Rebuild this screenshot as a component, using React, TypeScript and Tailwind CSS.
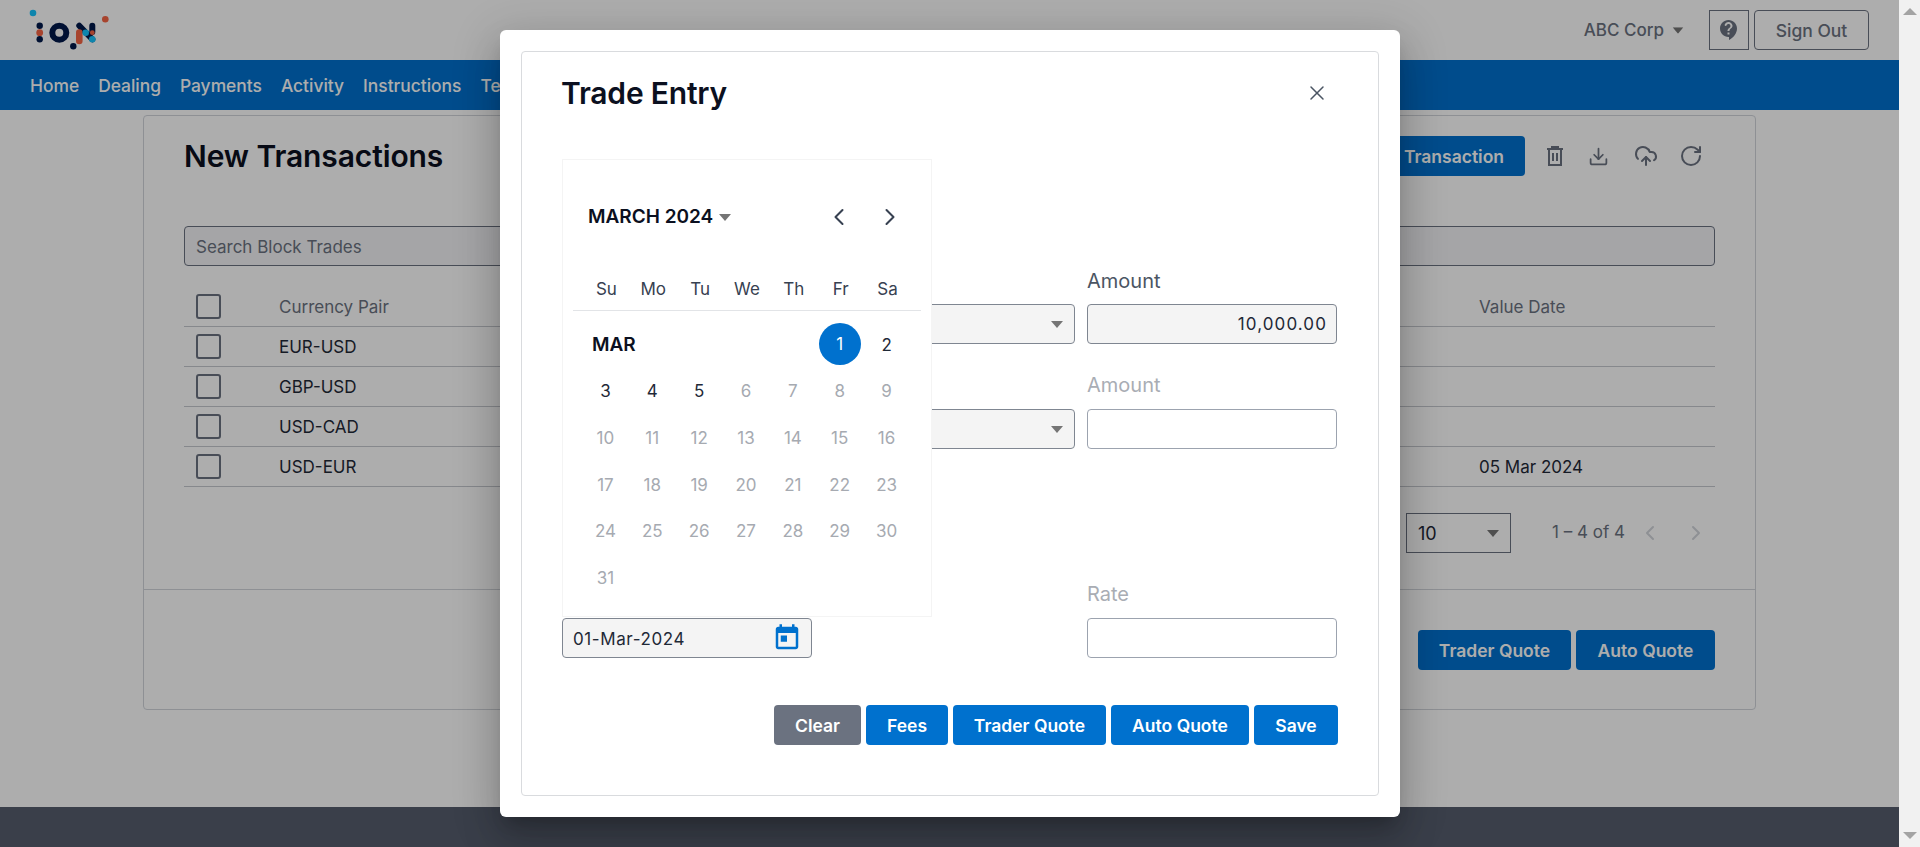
import { ChevronLeft, ChevronRight, CloudUpload, Download, RotateCw, X } from "lucide-react";

const navItems = ["Home", "Dealing", "Payments", "Activity", "Instructions", "Templates"];
const rows = [
    { pair: "EUR-USD", date: "" },
    { pair: "GBP-USD", date: "" },
    { pair: "USD-CAD", date: "" },
    { pair: "USD-EUR", date: "05 Mar 2024" },
];
const weekDays = ["Su", "Mo", "Tu", "We", "Th", "Fr", "Sa"];
const days = Array.from({ length: 29 }, (_, i) => i + 3);

function Caret({ className = "" }: { className?: string }) {
    return (
        <svg width="12" height="7" viewBox="0 0 12 7" className={className}>
            <polygon points="0,0 12,0 6,7" fill="#757575" />
        </svg>
    );
}

function Logo() {
    return (
        <svg width="90" height="50" viewBox="25 5 90 50">
            <circle cx="33" cy="13" r="3.3" fill="#15c4ff" />
            <circle cx="105.3" cy="19.3" r="3.3" fill="#f76545" />
            <circle cx="39.7" cy="25.7" r="3.2" fill="#00184a" />
            <circle cx="39.7" cy="39.3" r="3.2" fill="#00184a" />
            <circle cx="39.7" cy="32.7" r="3.4" fill="#f76545" />
            <circle cx="59.3" cy="32.7" r="7" fill="none" stroke="#00184a" strokeWidth="6" />
            <circle cx="73.3" cy="46.3" r="3.2" fill="#00184a" />
            <path d="M79.3 25.7 92.3 39.3" stroke="#00184a" strokeWidth="6" strokeLinecap="round" />
            <path d="M79.3 32.5V41" stroke="#f76545" strokeWidth="6.6" strokeLinecap="round" />
            <path d="M92.3 25.7V32" stroke="#00184a" strokeWidth="6" strokeLinecap="round" />
            <circle cx="92.3" cy="32.7" r="2.4" fill="#f76545" />
            <circle cx="85.7" cy="32.7" r="3.3" fill="#15c4ff" />
            <circle cx="92.3" cy="39.3" r="3.3" fill="#15c4ff" />
        </svg>
    );
}

function HelpIcon() {
    return (
        <svg width="24" height="24" viewBox="0 0 24 24" fill="#6b7280">
            <path d="M11.5 2C6.81 2 3 5.81 3 10.5S6.81 19 11.5 19h.5v3c4.86-2.34 8-7 8-11.5C20 5.81 16.19 2 11.5 2zm1 14.5h-2v-2h2v2zm.4-4.78c-.01.01-.02.03-.03.05-.05.08-.1.16-.14.24-.02.03-.03.07-.04.11-.03.07-.06.14-.08.21-.07.21-.1.43-.1.68H10.5c0-.51.08-.94.2-1.3 0-.01 0-.02.01-.03.01-.04.04-.06.05-.1.06-.16.13-.3.22-.44.03-.05.07-.1.1-.15.03-.04.05-.09.08-.12l.01.01c.84-1.1 2.21-1.44 2.32-2.68.09-.98-.61-1.93-1.57-2.13-1.04-.22-1.98.39-2.3 1.28-.14.36-.47.65-.88.65h-.2c-.6 0-1.04-.59-.87-1.17.55-1.82 2.37-3.09 4.43-2.79 1.69.25 3.04 1.64 3.33 3.33.44 2.44-1.63 3.03-2.77 4.6z" />
        </svg>
    );
}

function TrashIcon() {
    return (
        <svg width="20" height="22" viewBox="0 0 20 22" fill="none" stroke="#6b7280" strokeWidth="2">
            <path d="M2 4h16M7 4V2h6v2M4 4v16h12V4M8 8v8M12 8v8" />
        </svg>
    );
}

function TodayIcon() {
    return (
        <svg width="30" height="30" viewBox="0 0 24 24" fill="#0071ce">
            <path d="M19 3h-1V1h-2v2H8V1H6v2H5c-1.11 0-1.99.9-1.99 2L3 19c0 1.1.89 2 2 2h14c1.1 0 2-.9 2-2V5c0-1.1-.9-2-2-2zm0 16H5V8h14v11zM7 10h5v5H7z" />
        </svg>
    );
}

function Checkbox() {
    return <div className="w-[25px] h-[25px] rounded-[3px] border-2 border-[#6b7280]" />;
}

function ModalButton({ label, width, gray }: { label: string; width: string; gray?: boolean }) {
    return (
        <button className={`h-10 pt-[2px] rounded text-[17.5px] font-semibold text-white ${width} ${gray ? "bg-[#6b7280]" : "bg-[#0071ce]"}`}>
            {label}
        </button>
    );
}

function Calendar() {
    return (
        <div className="absolute left-[40px] top-[107px] w-[370px] h-[458px] bg-white border border-[#f4f4f4]">
            <div className="flex items-center h-8 mt-[41px] pl-[25px] text-[#0b1020]">
                <span className="w-[124px] whitespace-nowrap text-[19px] font-semibold">MARCH 2024</span>
                <Caret className="ml-[7px]" />
                <ChevronLeft className="w-7 h-7 ml-[94px] text-[#374151]" strokeWidth={1.75} />
                <ChevronRight className="w-7 h-7 ml-[23px] text-[#374151]" strokeWidth={1.75} />
            </div>
            <div className="mx-[10px] mt-[35px] px-[10px] border-b border-[#e2e4e7]">
                <div className="grid grid-cols-7 h-[42px] pt-[2px] text-[17px] text-[#374151]">
                    {weekDays.map((d) => (
                        <div key={d} className="flex items-center justify-center">{d}</div>
                    ))}
                </div>
            </div>
            <div className="grid grid-cols-7 auto-rows-[46.7px] ml-[19px] w-[328px] mt-[10px] text-[17px] text-[#a6aab1]">
                <div className="col-span-5 flex items-center pl-[10px] pt-[2px] text-[19px] font-semibold text-[#0b1020]">MAR</div>
                <div className="flex items-center justify-center">
                    <span className="flex items-center justify-center w-[42px] h-[42px] rounded-full bg-[#0071ce] text-white">1</span>
                </div>
                <div className="flex items-center justify-center pt-[2px] text-[#1f2937]">2</div>
                {days.map((d) => (
                    <div key={d} className={`flex items-center justify-center pt-[2px] ${d <= 5 ? "text-[#1f2937]" : ""}`}>{d}</div>
                ))}
            </div>
        </div>
    );
}

function TradeEntry() {
    return (
        <div className="absolute left-[500px] top-[30px] w-[900px] h-[787px] p-[21px] bg-white rounded-md shadow-[0_11px_15px_-7px_rgba(0,0,0,0.2),0_24px_38px_3px_rgba(0,0,0,0.14),0_9px_46px_8px_rgba(0,0,0,0.12)]">
            <div className="relative w-[858px] h-[745px] pl-[40px] pr-[41px] pt-[21px] border border-[#d9dbde] rounded">
                <div className="flex items-center justify-between h-10">
                    <h2 className="ml-[-1px] text-[30px] font-semibold tracking-[-0.2px] text-[#0b1020]">Trade Entry</h2>
                    <X className="w-6 h-6 mr-[8px] text-[#4b5563]" strokeWidth={1.5} />
                </div>

                <div className="grid grid-cols-3 gap-x-[12.5px] mt-[155px]">
                    <div />
                    <div className="pt-[36px]">
                        <div className="flex items-center justify-end h-10 pr-[11px] bg-[#f4f4f4] border border-[#7f8691] rounded">
                            <Caret />
                        </div>
                    </div>
                    <div>
                        <label className="block h-[26px] mb-[10px] text-[20px] leading-[26px] text-[#4b5563]">Amount</label>
                        <div className="flex items-center justify-end h-10 px-[9px] pt-[1px] bg-[#f4f4f4] border border-[#7f8691] rounded text-[17px] tracking-[1.1px] text-[#1f2937]">10,000.00</div>
                    </div>
                </div>

                <div className="grid grid-cols-3 gap-x-[12.5px] mt-[28px]">
                    <div />
                    <div className="pt-[37px]">
                        <div className="flex items-center justify-end h-10 pr-[11px] bg-[#f4f4f4] border border-[#7f8691] rounded">
                            <Caret />
                        </div>
                    </div>
                    <div>
                        <label className="block h-[26px] mb-[11px] text-[20px] leading-[26px] text-[#a9adb4]">Amount</label>
                        <div className="h-10 bg-white border border-[#9ca3af] rounded" />
                    </div>
                </div>

                <div className="grid grid-cols-3 gap-x-[12.5px] mt-[132px]">
                    <div className="pt-[37px]">
                        <div className="flex items-center justify-between h-10 pl-[10px] pr-[9px] bg-[#f4f4f4] border border-[#7f8691] rounded text-[17px] tracking-[0.6px] text-[#1f2937]">
                            <span className="pt-[3px]">01-Mar-2024</span>
                            <TodayIcon />
                        </div>
                    </div>
                    <div />
                    <div>
                        <label className="block h-[26px] mb-[11px] text-[20px] leading-[26px] text-[#a9adb4]">Rate</label>
                        <div className="h-10 bg-white border border-[#9ca3af] rounded" />
                    </div>
                </div>

                <div className="flex justify-end gap-[5px] mt-[47px] mr-[-1px]">
                    <ModalButton label="Clear" width="w-[87px]" gray />
                    <ModalButton label="Fees" width="w-[82px]" />
                    <ModalButton label="Trader Quote" width="w-[153px]" />
                    <ModalButton label="Auto Quote" width="w-[138px]" />
                    <ModalButton label="Save" width="w-[84px]" />
                </div>

                <Calendar />
            </div>
        </div>
    );
}

export default function App() {
    return (
        <div className="flex h-[847px] overflow-hidden bg-white font-[Inter,sans-serif]">
            <div className="relative flex flex-col flex-1 min-w-0">
                <header className="flex items-center justify-between h-[60px] pl-[25px] pr-[30px] bg-white">
                    <Logo />
                    <div className="flex items-center text-[#6b7280]">
                        <span className="pt-[2px] text-[17px] font-medium">ABC Corp</span>
                        <Caret className="ml-[8px] mr-[25px] scale-90" />
                        <div className="flex items-center justify-center w-10 h-10 border border-[#6b7280]">
                            <HelpIcon />
                        </div>
                        <button className="w-[115px] h-10 ml-[5px] pt-[2px] border border-[#6b7280] rounded text-[17.5px] font-medium">Sign Out</button>
                    </div>
                </header>

                <nav className="flex items-center gap-[19px] h-[50px] pl-[30px] pt-[2px] bg-[#0071ce] text-[17.4px] font-medium text-white">
                    {navItems.map((item) => (
                        <span key={item}>{item}</span>
                    ))}
                </nav>

                <main className="mt-[5px] ml-[143px] w-[1613px] h-[595px] border border-[#d1d5db] rounded">
                    <div className="h-[474px] px-[40px] pt-5 border-b border-[#d1d5db]">
                        <div className="flex items-center justify-between h-10">
                            <h1 className="text-[30px] font-semibold tracking-[-0.1px] text-[#0b1020]">New Transactions</h1>
                            <div className="flex items-center text-[#6b7280]">
                                <button className="w-[190px] h-10 pr-[21px] pt-[3px] rounded bg-[#0071ce] text-right text-[17.5px] font-semibold text-white">Add Transaction</button>
                                <div className="flex items-center justify-center w-[60px]"><TrashIcon /></div>
                                <Download className="w-[21px] h-[21px] ml-[3px]" strokeWidth={2} />
                                <CloudUpload className="w-6 h-6 ml-[25px]" strokeWidth={2} />
                                <RotateCw className="w-6 h-6 ml-[21px] mr-[12px]" strokeWidth={2} />
                            </div>
                        </div>

                        <div className="flex items-center h-10 mt-[50px] px-[11px] pt-[3px] bg-[#f3f4f6] border border-[#6b7280] rounded text-[17px] text-[#6b7280]">
                            Search Block Trades
                        </div>

                        <div className="mt-[21px] text-[17px] text-[#1f2937]">
                            <div className="grid grid-cols-[95px_1200px_1fr] items-center h-10 border-b border-[#c6c9ce] text-[#6b7280]">
                                <div className="pl-3"><Checkbox /></div>
                                <span className="pt-[3px]">Currency Pair</span>
                                <span className="pt-[3px]">Value Date</span>
                            </div>
                            {rows.map((row) => (
                                <div key={row.pair} className="grid grid-cols-[95px_1200px_1fr] items-center h-10 border-b border-[#c6c9ce]">
                                    <div className="pl-3"><Checkbox /></div>
                                    <span className="pt-[3px]">{row.pair}</span>
                                    <span className="pt-[3px]">{row.date}</span>
                                </div>
                            ))}
                        </div>

                        <div className="flex items-center justify-end mt-[26px] pr-[7px] text-[#6b7280]">
                            <div className="flex items-center justify-between w-[105px] h-10 pl-[11px] pr-[11px] border border-[#6b7280] text-[18px] text-[#1f2937]">
                                10
                                <Caret />
                            </div>
                            <span className="ml-[41px] w-[75px] whitespace-nowrap text-[17px]">1 – 4 of 4</span>
                            <ChevronLeft className="w-6 h-6 ml-[11px] text-[#d1d5db]" strokeWidth={2} />
                            <ChevronRight className="w-6 h-6 ml-[22px] text-[#d1d5db]" strokeWidth={2} />
                        </div>
                    </div>

                    <div className="flex justify-end gap-[5px] pt-10 pr-[40px]">
                        <button className="w-[153px] h-10 pt-[2px] rounded bg-[#0071ce] text-[17.5px] font-semibold text-white">Trader Quote</button>
                        <button className="w-[139px] h-10 pt-[2px] rounded bg-[#0071ce] text-[17.5px] font-semibold text-white">Auto Quote</button>
                    </div>
                </main>

                <footer className="h-10 mt-auto bg-[#565d6e]" />

                <div className="absolute inset-0 bg-black/32" />
                <TradeEntry />
            </div>

            <div className="flex flex-col items-center justify-between w-[21px] py-2 bg-[#f1f1f1]">
                <svg width="14" height="7" viewBox="0 0 14 7"><polygon points="7,0 14,7 0,7" fill="#a3a3a3" /></svg>
                <svg width="14" height="7" viewBox="0 0 14 7"><polygon points="0,0 14,0 7,7" fill="#a3a3a3" /></svg>
            </div>
        </div>
    );
}
